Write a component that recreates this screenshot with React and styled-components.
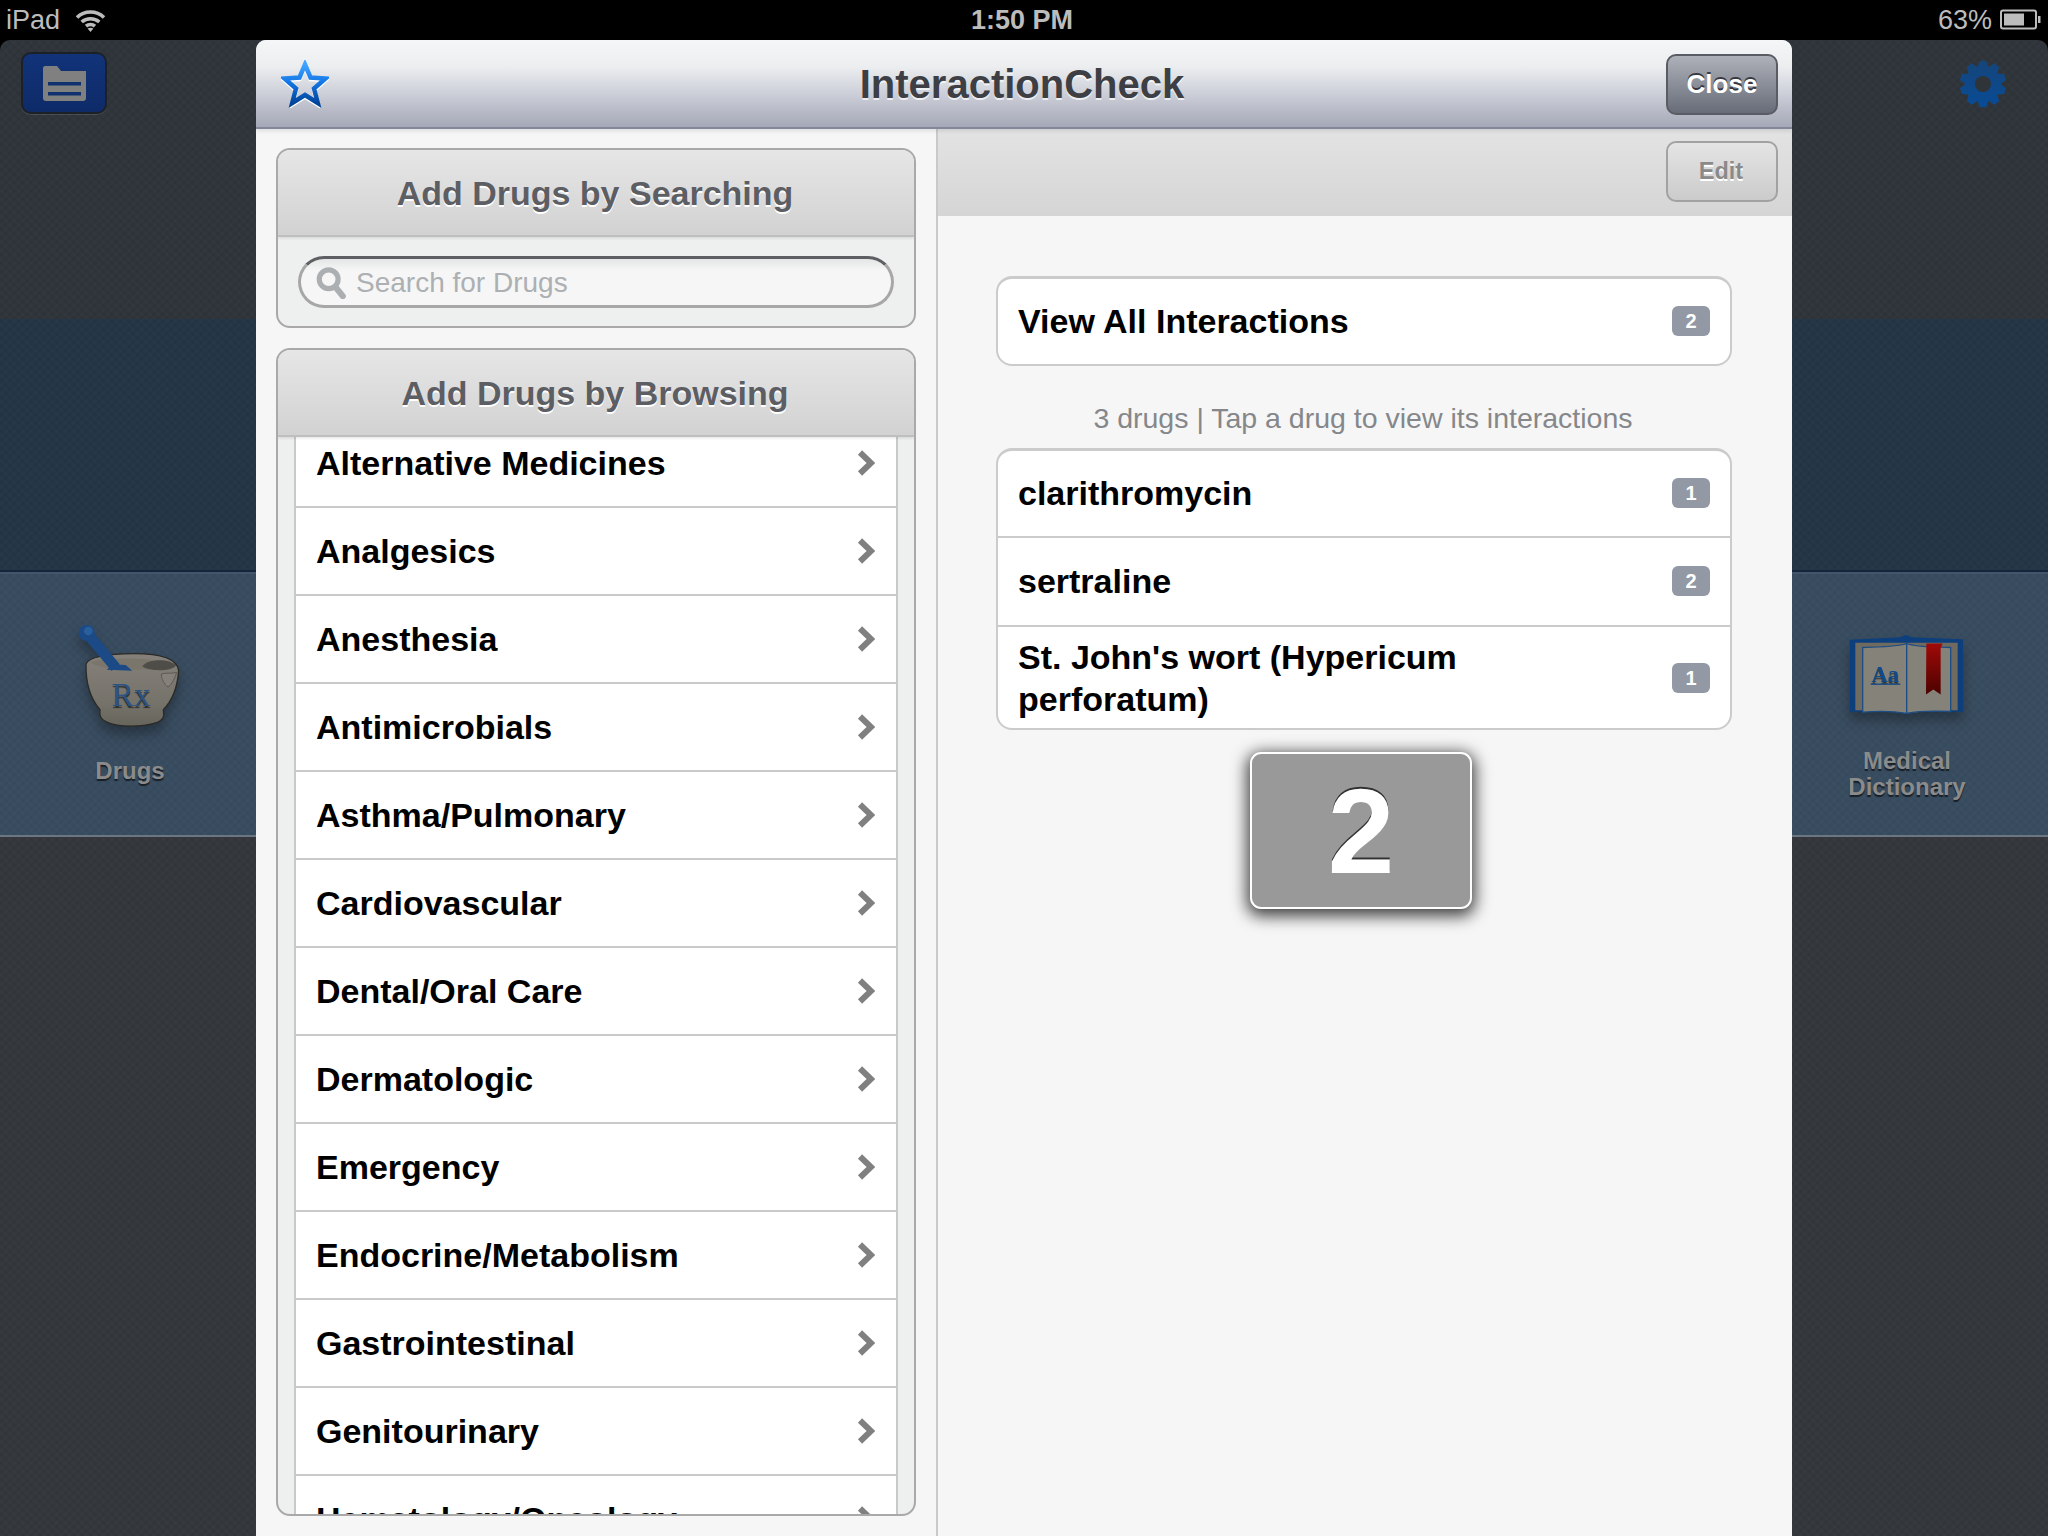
import React from 'react'
import styled, { createGlobalStyle } from 'styled-components'

const Global = createGlobalStyle`
  html, body {
    margin: 0;
    padding: 0;
    background: #000;
  }
  * {
    box-sizing: border-box;
  }
`

const Screen = styled.div`
  position: relative;
  width: 2048px;
  height: 1536px;
  overflow: hidden;
  display: flex;
  flex-direction: column;
  background: #000;
  font-family: "Liberation Sans", Arial, sans-serif;
`

const StatusBar = styled.div`
  height: 40px;
  flex: none;
  display: grid;
  grid-template-columns: 1fr auto 1fr;
  align-items: center;
  padding: 0 6px;
  color: #bcbcbc;
  font-size: 27px;
  line-height: 36px;
`

const StatusLeft = styled.div`
  display: flex;
  align-items: center;
  gap: 15px;
`

const StatusRight = styled.div`
  display: flex;
  align-items: center;
  justify-content: flex-end;
  gap: 8px;
`

const Clock = styled.div`
  font-weight: bold;
  font-size: 27px;
  margin-right: 4px;
`

const Backdrop = styled.div`
  flex: 1;
  display: flex;
  flex-direction: column;
  border-radius: 10px 10px 0 0;
  overflow: hidden;
`

const texture = `
  repeating-linear-gradient(45deg, rgba(255,255,255,0.006) 0 3px, rgba(0,0,0,0.012) 3px 6px),
  repeating-linear-gradient(-45deg, rgba(255,255,255,0.006) 0 3px, rgba(0,0,0,0.012) 3px 6px)
`

const Band = styled.div`
  height: ${p => p.$height || 'auto'};
  flex: ${p => (p.$height ? 'none' : 1)};
  background-color: ${p => p.$bg};
  background-image: ${texture};
`

const ToolBand = styled(Band)`
  display: flex;
  justify-content: space-between;
  align-items: flex-start;
  padding: 12px 41px 0 21px;
`

const TileBand = styled(Band)`
  display: flex;
  justify-content: space-between;
  border-top: 2px solid #42556a;
  border-bottom: 2px solid #6c7680;
  box-shadow: 0 -2px 0 #15253a;
`

const MenuButton = styled.div`
  width: 86px;
  height: 62px;
  display: flex;
  align-items: center;
  justify-content: center;
  background: linear-gradient(#12337a, #0e2b68);
  border: 2px solid #1b2126;
  border-radius: 10px;
  box-shadow: 0 1px 0 rgba(255, 255, 255, 0.12);
`

const GearWrap = styled.div`
  margin-top: 8px;
`

const Tile = styled.div`
  width: ${p => p.$width}px;
  padding-top: ${p => p.$top}px;
  display: flex;
  flex-direction: column;
  align-items: center;
  color: #8b8b8b;
  font-size: 24px;
  line-height: 26px;
  font-weight: bold;
  text-align: center;
  text-shadow: 0 2px 1px rgba(0, 0, 0, 0.6);

  svg {
    filter: drop-shadow(0 8px 6px rgba(0, 0, 0, 0.3));
  }
`

const TileLabel = styled.div`
  margin-top: ${p => p.$gap}px;
`

const Modal = styled.div`
  position: absolute;
  left: 256px;
  top: 40px;
  width: 1536px;
  height: 1496px;
  display: flex;
  flex-direction: column;
  background: #f6f6f6;
  border-radius: 10px 10px 0 0;
  overflow: hidden;
`

const Header = styled.div`
  height: 89px;
  flex: none;
  display: grid;
  grid-template-columns: 1fr auto 1fr;
  align-items: center;
  padding: 1px 14px 0 25px;
  background: linear-gradient(#f5f6f8 0%, #eceef0 30%, #c9ccd6 65%, #a5a8b6 100%);
  border-bottom: 2px solid #84879a;
  box-shadow: 0 2px 4px rgba(0, 0, 0, 0.1);
  position: relative;
  z-index: 1;
`

const HeaderStar = styled.div`
  display: flex;
  align-items: center;
  margin-top: -1px;
`

const Title = styled.div`
  color: #3d3f44;
  font-size: 40px;
  font-weight: bold;
  text-shadow: 0 2px 0 rgba(255, 255, 255, 0.7);
  padding-right: 15px;
`

const HeaderRight = styled.div`
  display: flex;
  justify-content: flex-end;
`

const BarButton = styled.div`
  width: 112px;
  height: 61px;
  display: flex;
  align-items: center;
  justify-content: center;
  padding: 0 ${p => (p.$dark ? 0 : 2)}px ${p => (p.$dark ? 0 : 1)}px 0;
  border-radius: 10px;
  font-size: ${p => (p.$dark ? 26 : 23.5)}px;
  font-weight: bold;
  color: ${p => (p.$dark ? '#fff' : '#8a8a8a')};
  background: ${p => (p.$dark ? 'linear-gradient(#aeb1b9, #676c78)' : 'linear-gradient(#e4e4e4, #cbcbcb)')};
  border: 2px solid ${p => (p.$dark ? '#5a5c63' : '#a2a2a2')};
  text-shadow: ${p => (p.$dark ? '0 -2px 0 rgba(30,30,40,0.8)' : '0 2px 0 #fff')};
`

const Columns = styled.div`
  flex: 1;
  min-height: 0;
  display: flex;
`

const LeftColumn = styled.div`
  width: 682px;
  flex: none;
  display: flex;
  flex-direction: column;
  gap: 20px;
  padding: 19px 20px 20px;
  border-right: 2px solid #c9c9c9;
`

const Card = styled.div`
  display: flex;
  flex-direction: column;
  flex: ${p => (p.$grow ? 1 : 'none')};
  min-height: 0;
  background: #eef0ef;
  border: 2px solid #a9a9a9;
  border-radius: 14px;
  overflow: hidden;
`

const CardHeader = styled.div`
  height: 87px;
  flex: none;
  display: flex;
  align-items: center;
  justify-content: center;
  padding: 2px 2px 0 0;
  color: #5d5e63;
  font-size: 34px;
  font-weight: bold;
  text-shadow: 0 2px 0 #fff;
  background: linear-gradient(#e6e6e6, #d2d2d2);
  border-bottom: 2px solid #bfbfbf;
  position: relative;
  z-index: 1;
  box-shadow: 0 1px 3px rgba(0, 0, 0, 0.12);
`

const SearchWrap = styled.div`
  padding: 19px 20px 18px;
`

const SearchPill = styled.div`
  height: 52px;
  display: flex;
  align-items: center;
  gap: 9px;
  padding: 1px 15px 0;
  border-radius: 26px;
  border: 3px solid #a7a7a7;
  border-top-color: #5e5f63;
  background: linear-gradient(#e4e5e5, #f6f6f6 25%);
  color: #adb0b2;
  font-size: 28px;
`

const BrowseList = styled.div`
  flex: 1;
  min-height: 0;
  overflow: hidden;
  margin: 0 16px;
  background: #fff;
  border-left: 2px solid #c9c9c9;
  border-right: 2px solid #c9c9c9;
`

const BrowseScroll = styled.div`
  margin-top: -17px;
`

const BrowseRow = styled.div`
  height: 88px;
  display: flex;
  align-items: center;
  justify-content: space-between;
  padding: 0 21px 0 20px;
  border-bottom: 2px solid #c9c9c9;
  color: #000;
  font-size: 34px;
  font-weight: bold;
`

const RightColumn = styled.div`
  flex: 1;
  display: flex;
  flex-direction: column;
`

const EditBar = styled.div`
  height: 87px;
  flex: none;
  display: flex;
  justify-content: flex-end;
  align-items: flex-start;
  padding: 12px 14px 0 0;
  background: linear-gradient(#e3e3e3, #d5d5d5);
`

const RightBody = styled.div`
  padding: 60px 60px 0 58px;
`

const Group = styled.div`
  background: #fff;
  border: 2px solid #cbcbcb;
  border-top-width: 3px;
  border-radius: 16px;
  overflow: hidden;
`

const GroupRow = styled.div`
  min-height: ${p => p.$height}px;
  display: flex;
  align-items: center;
  justify-content: space-between;
  padding: 0 20px 0 20px;
  color: #000;
  font-size: 34px;
  line-height: 42px;
  font-weight: bold;
  & + & {
    border-top: 2px solid #cbcbcb;
  }
`

const RowText = styled.div`
  max-width: 560px;
  margin-bottom: ${p => (p.$wrap ? 0 : 2)}px;
`

const Badge = styled.div`
  width: 38px;
  height: 30px;
  flex: none;
  margin-bottom: ${p => (p.$wrap ? 0 : 2)}px;
  display: flex;
  align-items: center;
  justify-content: center;
  background: #9299a4;
  border-radius: 6px;
  color: #fff;
  font-size: 20px;
  line-height: 30px;
`

const Caption = styled.div`
  height: 82px;
  display: flex;
  align-items: center;
  justify-content: center;
  color: #85878a;
  font-size: 28.5px;
  padding: 22px 2px 0 0;
`

const DragBadge = styled.div`
  position: absolute;
  left: 994px;
  top: 712px;
  width: 222px;
  height: 157px;
  display: flex;
  align-items: center;
  justify-content: center;
  background: #999;
  border: 2px solid #fff;
  border-radius: 11px;
  box-shadow: 0 4px 16px 3px rgba(0, 0, 0, 0.75);
  color: #fff;
  font-size: 120px;
  font-weight: bold;
  text-shadow: 0 -2px 0 rgba(30, 30, 30, 0.85);
`

const categories = [
  'Alternative Medicines',
  'Analgesics',
  'Anesthesia',
  'Antimicrobials',
  'Asthma/Pulmonary',
  'Cardiovascular',
  'Dental/Oral Care',
  'Dermatologic',
  'Emergency',
  'Endocrine/Metabolism',
  'Gastrointestinal',
  'Genitourinary',
  'Hematology/Oncology',
]

const Wifi = () => (
  <svg width="31" height="24" viewBox="0 0 31 24" fill="none" stroke="#bcbcbc" strokeWidth="3.6">
    <path d="M2 9.5C9.5 2.2 21.5 2.2 29 9.5" />
    <path d="M6.7 14C11.6 9.6 19.4 9.6 24.3 14" />
    <path d="M11 18.2C13.6 16 17.4 16 20 18.2" />
    <path d="M15.5 24L12.6 20.6C14.4 19.4 16.6 19.4 18.4 20.6Z" fill="#bcbcbc" stroke="none" />
  </svg>
)

const Battery = () => (
  <svg width="42" height="22" viewBox="0 0 42 22">
    <rect x="1" y="1.5" width="35" height="18" rx="2" fill="none" stroke="#bcbcbc" strokeWidth="2" />
    <rect x="4" y="4.5" width="20" height="12" fill="#bcbcbc" />
    <path d="M38 7h2.5v7H38z" fill="#bcbcbc" />
  </svg>
)

const MenuIcon = () => (
  <svg width="43" height="35" viewBox="0 0 43 35">
    <path
      d="M2 0H14L18 5H43V32C43 33.7 42 35 40 35H3C1 35 0 33.7 0 32V2C0 1 1 0 2 0Z"
      fill="#808080"
    />
    <path d="M19 2H26V5H21ZM29 2H34V5H29ZM37 2H42L43 5H37Z" fill="#10306f" opacity="0.35" />
    <rect x="5" y="16" width="33" height="3.5" fill="#10306f" />
    <rect x="5" y="26" width="33" height="3.5" fill="#10306f" />
  </svg>
)

const gearPath = () => {
  const teeth = 10
  const pts = []
  for (let i = 0; i < teeth; i++) {
    const a = (i / teeth) * Math.PI * 2 - Math.PI / 2
    const w = Math.PI / teeth
    const add = (r, d) => pts.push(`${(24 + r * Math.cos(a + d)).toFixed(1)} ${(24 + r * Math.sin(a + d)).toFixed(1)}`)
    add(18, -w * 0.95)
    add(23.5, -w * 0.42)
    add(23.5, w * 0.42)
    add(18, w * 0.95)
  }
  return `M${pts.join('L')}Z`
}

const Gear = () => (
  <svg width="48" height="48" viewBox="0 0 48 48">
    <defs>
      <linearGradient id="gearFill" x1="0" y1="0" x2="0" y2="1">
        <stop offset="0" stopColor="#15457a" />
        <stop offset="1" stopColor="#084b96" />
      </linearGradient>
    </defs>
    <path d={gearPath()} fill="url(#gearFill)" />
    <circle cx="24" cy="24" r="8" fill="#2f3439" />
  </svg>
)

const Star = () => (
  <svg width="48" height="48" viewBox="0 0 48 48" fill="none">
    <defs>
      <linearGradient id="starStroke" x1="0" y1="0" x2="0" y2="1">
        <stop offset="0" stopColor="#42a4ff" />
        <stop offset="0.45" stopColor="#1578e6" />
        <stop offset="1" stopColor="#00449a" />
      </linearGradient>
    </defs>
    <path d="M24 4.5L29.5 17.5L44.5 18.5L33 28.5L36.8 43L24 35L11.2 43L15 28.5L3.5 18.5L18.5 17.5Z"
      stroke="#fff" strokeWidth="4.5" transform="translate(0 1.5)" strokeLinejoin="miter" />
    <path d="M24 4.5L29.5 17.5L44.5 18.5L33 28.5L36.8 43L24 35L11.2 43L15 28.5L3.5 18.5L18.5 17.5Z"
      stroke="url(#starStroke)" strokeWidth="4.5" strokeLinejoin="miter" />
  </svg>
)

const SearchIcon = () => (
  <svg width="31" height="32" viewBox="0 0 32 34" fill="none" stroke="#abafb2">
    <circle cx="13" cy="13" r="10" strokeWidth="5.5" />
    <path d="M20 21L28 31" strokeWidth="6.5" strokeLinecap="round" />
  </svg>
)

const Chevron = () => (
  <svg width="18" height="26" viewBox="0 0 18 26" fill="none">
    <path d="M3 2.5L14 13L3 23.5" stroke="#808080" strokeWidth="6" />
  </svg>
)

const Mortar = () => (
  <svg width="110" height="110" viewBox="223 192 330 330">
    <defs>
      <linearGradient id="bowl" x1="0" y1="0" x2="0" y2="1">
        <stop offset="0" stopColor="#85817a" />
        <stop offset="0.7" stopColor="#75726a" />
        <stop offset="1" stopColor="#67645c" />
      </linearGradient>
    </defs>
    <path d="M256 315C262 298 300 285 400 284C480 284 530 300 534 335C530 390 510 430 488 452C490 470 492 480 470 490C430 505 350 505 320 490C298 480 296 470 298 452C270 420 255 370 256 315Z"
      fill="url(#bowl)" stroke="#2b2a26" strokeWidth="4" />
    <path d="M268 310C300 296 470 290 524 320C500 335 300 340 268 310Z" fill="#7a766c" />
    <path d="M425 322C440 298 510 298 526 320C510 338 445 338 425 322Z" fill="#4f4d47" />
    <path d="M482 345C496 340 515 345 528 340C520 365 510 380 502 384C490 375 482 360 482 345Z" fill="#85817a" stroke="#5c5a52" strokeWidth="3" />
    <path d="M262 226L345 326" stroke="#1b4a86" strokeWidth="32" />
    <path d="M318 332L395 335L375 318L335 316Z" fill="#1b4a86" />
    <circle cx="258" cy="222" r="24" fill="#1b4a86" />
    <circle cx="263" cy="216" r="13" fill="#2a5f9e" />
    <text x="392" y="440" textAnchor="middle" fontFamily="Liberation Serif, serif" fontWeight="normal" fontSize="100" fill="#2b5383">Rx</text>
  </svg>
)

const Book = () => (
  <svg width="120" height="87" viewBox="203 218 360 260">
    <defs>
      <linearGradient id="ribbon" x1="0" y1="0" x2="0" y2="1">
        <stop offset="0" stopColor="#a00a08" />
        <stop offset="1" stopColor="#4c0200" />
      </linearGradient>
    </defs>
    <path d="M211 241L365 233L380 226L396 233L551 239V457L212 457Z" fill="#0d3f7d" />
    <path d="M228 250L380 250L535 250V452L228 452Z" fill="#6f6b60" />
    <path d="M250 264C300 262 360 262 382 252C410 264 470 262 514 264V456C470 454 410 456 382 462C350 456 300 454 250 458Z"
      fill="#85827a" stroke="#1c4d85" strokeWidth="4" />
    <path d="M382 252V462" stroke="#1c4d85" strokeWidth="4" />
    <text x="318" y="368" textAnchor="middle" fontFamily="Liberation Serif, serif" fontWeight="bold" fontSize="68" fill="#0f4a8a">Aa</text>
    <path d="M274 374H363" stroke="#0f4a8a" strokeWidth="4" />
    <path d="M441 252H490L484 265V405L462 390L440 405Z" fill="url(#ribbon)" />
  </svg>
)

const App = () => (
  <Screen>
    <Global />
    <StatusBar>
      <StatusLeft>
        <span>iPad</span>
        <Wifi />
      </StatusLeft>
      <Clock>1:50 PM</Clock>
      <StatusRight>
        <span>63%</span>
        <Battery />
      </StatusRight>
    </StatusBar>

    <Backdrop>
      <ToolBand $height="279px" $bg="#2e3439">
        <MenuButton>
          <MenuIcon />
        </MenuButton>
        <GearWrap>
          <Gear />
        </GearWrap>
      </ToolBand>
      <Band $height="253px" $bg="#233546" />
      <TileBand $height="265px" $bg="#384c5f">
        <Tile $width={260} $top={49}>
          <Mortar />
          <TileLabel $gap={25}>Drugs</TileLabel>
        </Tile>
        <Tile $width={282} $top={58}>
          <Book />
          <TileLabel $gap={29}>
            Medical
            <br />
            Dictionary
          </TileLabel>
        </Tile>
      </TileBand>
      <Band $bg="#33373c" />
    </Backdrop>

    <Modal>
      <Header>
        <HeaderStar>
          <Star />
        </HeaderStar>
        <Title>InteractionCheck</Title>
        <HeaderRight>
          <BarButton $dark>Close</BarButton>
        </HeaderRight>
      </Header>
      <Columns>
        <LeftColumn>
          <Card>
            <CardHeader>Add Drugs by Searching</CardHeader>
            <SearchWrap>
              <SearchPill>
                <SearchIcon />
                Search for Drugs
              </SearchPill>
            </SearchWrap>
          </Card>
          <Card $grow>
            <CardHeader>Add Drugs by Browsing</CardHeader>
            <BrowseList>
              <BrowseScroll>
                {categories.map(name => (
                  <BrowseRow key={name}>
                    {name}
                    <Chevron />
                  </BrowseRow>
                ))}
              </BrowseScroll>
            </BrowseList>
          </Card>
        </LeftColumn>
        <RightColumn>
          <EditBar>
            <BarButton>Edit</BarButton>
          </EditBar>
          <RightBody>
            <Group>
              <GroupRow $height={85}>
                <RowText>View All Interactions</RowText>
                <Badge>2</Badge>
              </GroupRow>
            </Group>
            <Caption>3 drugs | Tap a drug to view its interactions</Caption>
            <Group>
              <GroupRow $height={85}>
                <RowText>clarithromycin</RowText>
                <Badge>1</Badge>
              </GroupRow>
              <GroupRow $height={89}>
                <RowText>sertraline</RowText>
                <Badge>2</Badge>
              </GroupRow>
              <GroupRow $height={103}>
                <RowText $wrap>St. John's wort (Hypericum perforatum)</RowText>
                <Badge $wrap>1</Badge>
              </GroupRow>
            </Group>
          </RightBody>
        </RightColumn>
      </Columns>
      <DragBadge>2</DragBadge>
    </Modal>
  </Screen>
)

export default App
